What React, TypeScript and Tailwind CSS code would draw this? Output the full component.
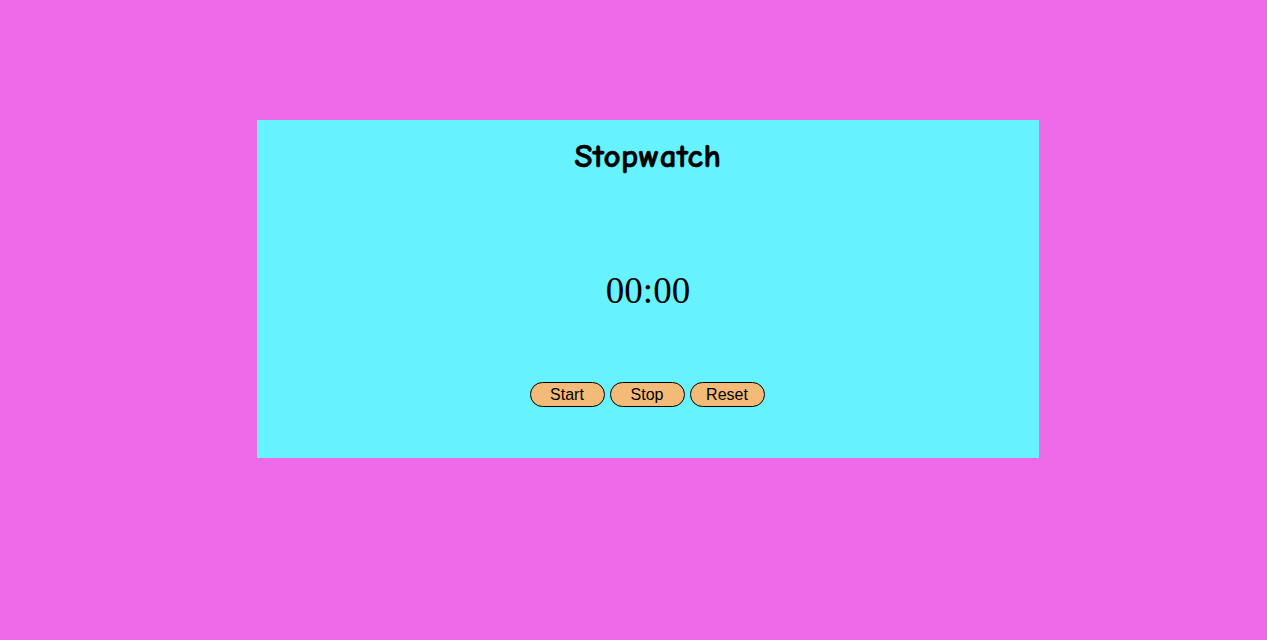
export default function App() {
  return (
    <div className="min-h-[640px] w-full bg-[#ef6ae9] pt-[120px]">
      <div className="ml-[257px] flex h-[338px] w-[782px] flex-col items-center bg-[#66f3ff]">
        <h1
          className="mt-[18px] text-[33px] font-bold leading-[36px] tracking-[0.5px] text-black [-webkit-text-stroke:0.6px_black]"
          style={{ fontFamily: '"Comic Sans MS", "Comic Neue", "DejaVu Sans", cursive' }}
        >
          Stopwatch
        </h1>
        <div
          className="mt-[96px] text-[37px] leading-[42px] text-black"
          style={{ fontFamily: '"Liberation Serif", "Times New Roman", serif' }}
        >
          00:00
        </div>
        <div
          className="mt-[70px] mr-[2px] flex gap-[5px]"
          style={{ fontFamily: '"Liberation Sans", Arial, sans-serif' }}
        >
          {['Start', 'Stop', 'Reset'].map((t) => (
            <button
              key={t}
              className="h-[25px] w-[75px] rounded-full border border-black bg-[#f3bb77] pt-px text-[16px] leading-none text-black"
            >
              {t}
            </button>
          ))}
        </div>
      </div>
    </div>
  );
}
